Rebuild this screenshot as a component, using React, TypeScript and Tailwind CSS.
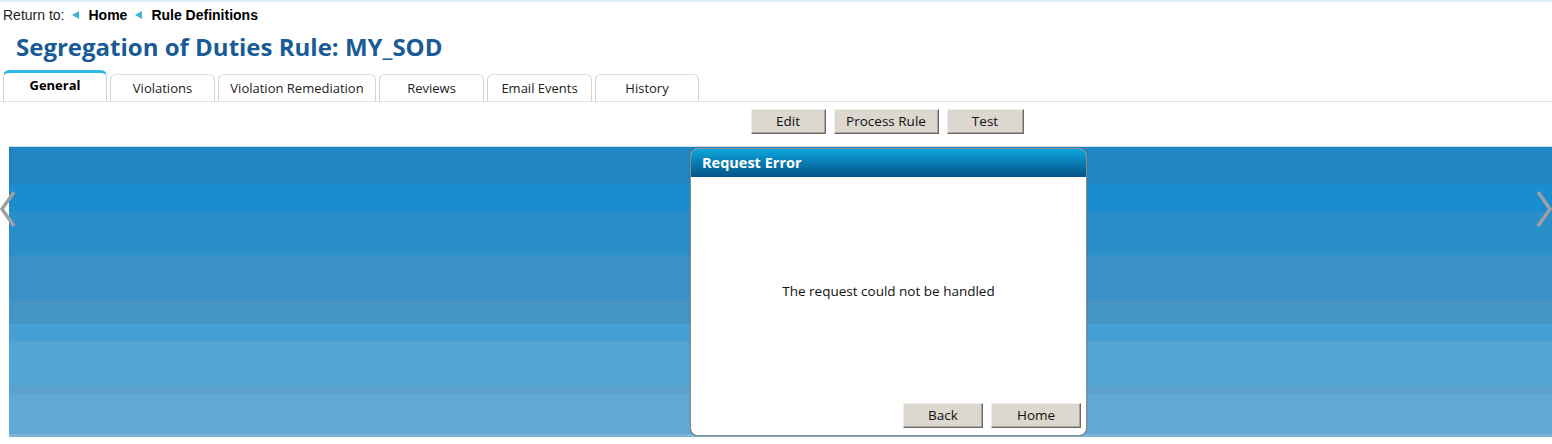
import { useState } from "react";

const tabs = ["General", "Violations", "Violation Remediation", "Reviews", "Email Events", "History"];

// blue backdrop bands, top to bottom
const bands: { h: string; c: string }[] = [
  { h: "h-[37px]", c: "bg-[#2185c1]" },
  { h: "h-[28px]", c: "bg-[#198dcd]" },
  { h: "h-[43px]", c: "bg-[#2a8ec9]" },
  { h: "h-[44px]", c: "bg-[#3a91c8]" },
  { h: "h-[25px]", c: "bg-[#4495c6]" },
  { h: "h-[17px]", c: "bg-[#47a0d5]" },
  { h: "h-[45px]", c: "bg-[#52a5d4]" },
  { h: "h-[7px]", c: "bg-[#5ba1cd]" },
  { h: "h-[41px]", c: "bg-[#62a8d4]" },
  { h: "h-[3px]", c: "bg-[#7ab6dc]" },
];

function GrayButton({ label, w }: { label: string; w: string }) {
  return (
    <button
      className={`${w} h-[25px] bg-[#dcd7cf] text-[13.5px] text-[#111] border border-t-[#f2efea] border-l-[#f2efea] border-r-[#6f6a64] border-b-[#6f6a64] shadow-[inset_-1px_-1px_0_#a9a49c]`}
    >
      {label}
    </button>
  );
}

function Arrow() {
  return (
    <span className="inline-block w-0 h-0 border-y-[4px] border-y-transparent border-r-[7px] border-r-[#3bb3d6] mr-[9px] ml-[8px] align-middle relative -top-[1px]" />
  );
}

export default function App() {
  const [active, setActive] = useState(0);

  return (
    <div className="w-[1552px] h-[444px] bg-white overflow-hidden font-['Open_Sans',sans-serif] text-[#111]">
      <div className="h-[2px] bg-[#d9eef5]" />

      {/* breadcrumb */}
      <div className="pl-[3px] pt-[4px] h-[20px] text-[14px] leading-[18px] font-['Liberation_Sans',Arial,sans-serif] text-[#222]">
        Return to:
        <Arrow />
        <span className="font-bold text-black">Home</span>
        <Arrow />
        <span className="font-bold text-black">Rule Definitions</span>
      </div>

      <h1 className="pl-[16px] pt-[11px] h-[48px] text-[24px] leading-[28px] font-bold text-[#1a5b97]">
        Segregation of Duties Rule: MY_SOD
      </h1>

      {/* tabs */}
      <div className="flex items-end gap-[3px] pl-[3px] h-[32px] border-b border-[#e2e2e2]">
        {tabs.map((t, i) => {
          const widths = ["w-[104px]", "w-[105px]", "w-[158px]", "w-[105px]", "w-[105px]", "w-[104px]"];
          const on = i === active;
          return (
            <button
              key={t}
              onClick={() => setActive(i)}
              className={`${widths[i]} ${
                on
                  ? "h-[31px] border-t-[3px] border-t-[#2cbbe6] font-bold text-black pb-[4px]"
                  : "h-[27px] border-t border-t-[#dddddd] text-[#222]"
              } rounded-t-[6px] border-x border-[#d8d2cc] bg-white text-[13px] leading-[16px] flex items-center justify-center`}
            >
              {t}
            </button>
          );
        })}
      </div>

      {/* action buttons */}
      <div className="flex justify-center gap-[8px] pt-[7px] h-[44px] pl-[222px]">
        <GrayButton label="Edit" w="w-[75px]" />
        <GrayButton label="Process Rule" w="w-[105px]" />
        <GrayButton label="Test" w="w-[77px]" />
      </div>

      {/* blue area with dialog */}
      <div className="relative ml-[9px] border-t border-[#c9dde9]">
        <div className="flex flex-col">
          {bands.map((b, i) => (
            <div key={i} className={`${b.h} ${b.c}`} />
          ))}
        </div>

        <svg className="absolute -left-[9px] top-[43px]" width="16" height="38" viewBox="0 0 16 38">
          <path d="M14 2 L2 19 L14 36" fill="none" stroke="#a0a0a0" strokeWidth="3.5" />
        </svg>
        <svg className="absolute right-0 top-[43px]" width="16" height="38" viewBox="0 0 16 38">
          <path d="M2 2 L14 19 L2 36" fill="none" stroke="#a0a0a0" strokeWidth="3.5" />
        </svg>

        <div className="absolute left-[681px] top-[1px] w-[397px] h-[288px] bg-white rounded-[8px] border border-[#8c8c8c] overflow-hidden flex flex-col shadow-[0_0_1px_#555]">
          <div className="h-[28px] bg-gradient-to-b from-[#0ba6dc] to-[#07538a] text-white font-bold text-[14.5px] leading-[28px] pl-[11px]">
            Request Error
          </div>
          <div className="flex-1 flex items-center justify-center text-[13.5px] text-[#111] pt-[2px]">
            The request could not be handled
          </div>
          <div className="flex justify-end gap-[8px] pr-[5px] pb-[7px]">
            <GrayButton label="Back" w="w-[80px]" />
            <GrayButton label="Home" w="w-[90px]" />
          </div>
        </div>
      </div>
    </div>
  );
}
